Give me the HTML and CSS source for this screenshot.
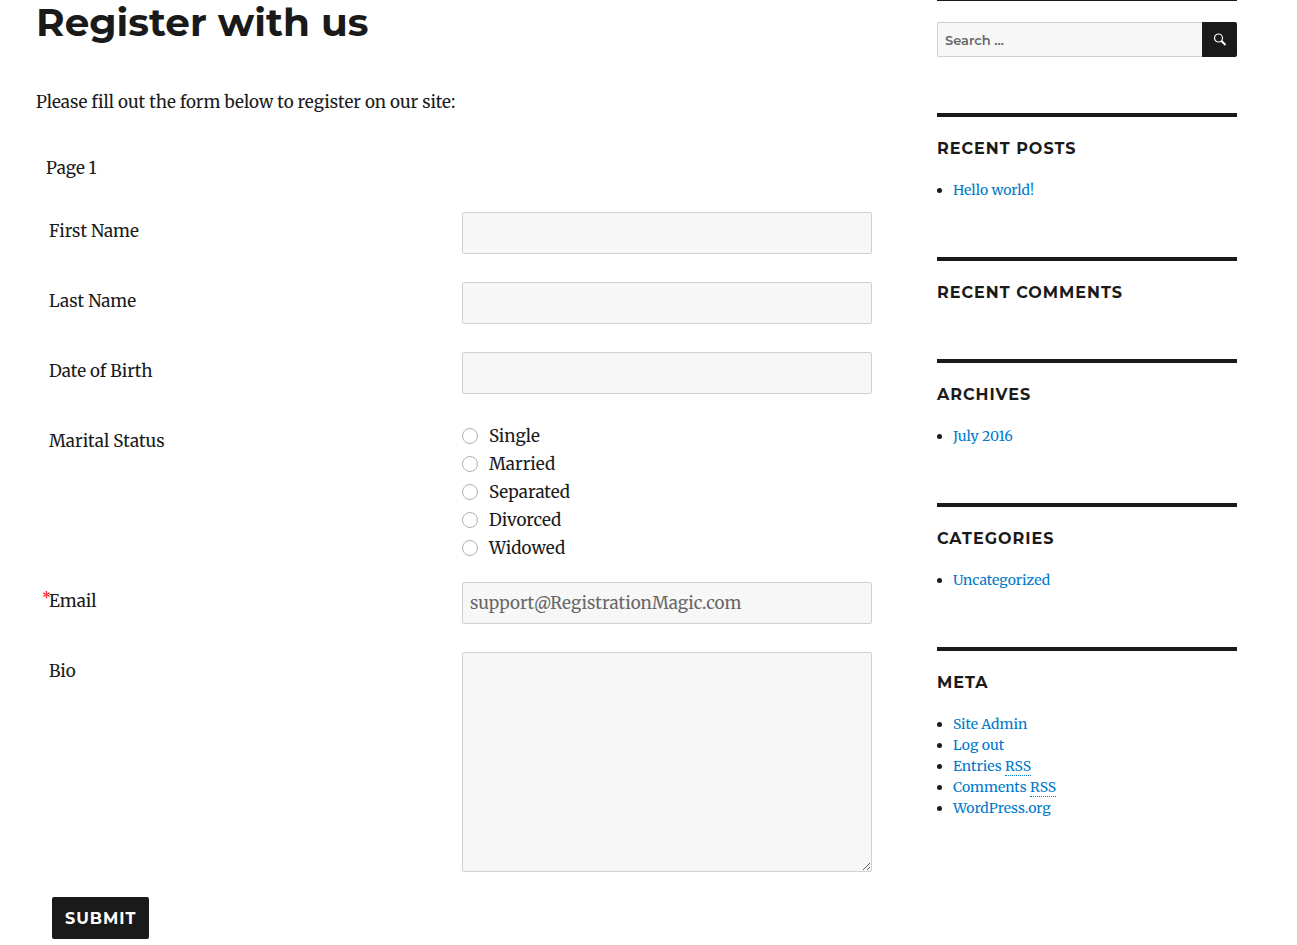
FILE: index.html
```html
<!DOCTYPE html>
<html lang="en">
<head>
  <meta charset="UTF-8">
  <meta name="viewport" content="width=device-width, initial-scale=1.0">
  <title>Register with us</title>
  <link rel="stylesheet" href="styles.css">
</head>
<body>
  <div class="site-content">
    <main class="entry">
      <h1 class="entry-title">Register with us</h1>
      <p class="entry-intro">Please fill out the form below to register on our site:</p>

      <form class="register-form">
        <div class="page-title">Page 1</div>

        <div class="form-row">
          <label class="row-label" for="first-name"><span class="mark"></span>First Name</label>
          <input class="field" type="text" id="first-name">
        </div>
        <div class="form-row">
          <label class="row-label" for="last-name"><span class="mark"></span>Last Name</label>
          <input class="field" type="text" id="last-name">
        </div>
        <div class="form-row">
          <label class="row-label" for="birth-date"><span class="mark"></span>Date of Birth</label>
          <input class="field" type="text" id="birth-date">
        </div>
        <div class="form-row form-row-radio" role="radiogroup" aria-labelledby="marital-label">
          <div class="row-label" id="marital-label"><span class="mark"></span>Marital Status</div>
          <div class="options">
            <label class="option"><input type="radio" name="marital" value="single">Single</label>
            <label class="option"><input type="radio" name="marital" value="married">Married</label>
            <label class="option"><input type="radio" name="marital" value="separated">Separated</label>
            <label class="option"><input type="radio" name="marital" value="divorced">Divorced</label>
            <label class="option"><input type="radio" name="marital" value="widowed">Widowed</label>
          </div>
        </div>
        <div class="form-row">
          <label class="row-label" for="email"><span class="mark">*</span>Email</label>
          <input class="field" type="email" id="email" placeholder="support@RegistrationMagic.com" required>
        </div>
        <div class="form-row">
          <label class="row-label" for="bio"><span class="mark"></span>Bio</label>
          <textarea class="field field-area" id="bio"></textarea>
        </div>

        <button class="submit" type="submit">Submit</button>
      </form>
    </main>

    <aside class="sidebar">
      <section class="widget widget-search">
        <form class="search-form" role="search">
          <input class="search-field" type="search" placeholder="Search …" aria-label="Search">
          <button class="search-submit" type="submit" aria-label="Search">
            <svg width="14" height="14" viewBox="0 0 14 14" fill="none" stroke="#fff">
              <circle cx="5.5" cy="5" r="4" stroke-width="1.2"/>
              <path d="M8.5 8L12.5 12" stroke-width="2"/>
            </svg>
          </button>
        </form>
      </section>

      <section class="widget">
        <h2 class="widget-title">Recent Posts</h2>
        <ul>
          <li><a href="#">Hello world!</a></li>
        </ul>
      </section>

      <section class="widget">
        <h2 class="widget-title">Recent Comments</h2>
      </section>

      <section class="widget">
        <h2 class="widget-title">Archives</h2>
        <ul>
          <li><a href="#">July 2016</a></li>
        </ul>
      </section>

      <section class="widget">
        <h2 class="widget-title">Categories</h2>
        <ul>
          <li><a href="#">Uncategorized</a></li>
        </ul>
      </section>

      <section class="widget">
        <h2 class="widget-title">Meta</h2>
        <ul>
          <li><a href="#">Site Admin</a></li>
          <li><a href="#">Log out</a></li>
          <li><a href="#">Entries <abbr title="Really Simple Syndication">RSS</abbr></a></li>
          <li><a href="#">Comments <abbr title="Really Simple Syndication">RSS</abbr></a></li>
          <li><a href="#">WordPress.org</a></li>
        </ul>
      </section>
    </aside>
  </div>
</body>
</html>
```
FILE: styles.css
```css
* {
  box-sizing: border-box;
}

body {
  margin: 0;
  background: #fff;
  color: #1a1a1a;
  font-family: Merriweather, "DejaVu Serif", serif;
  font-size: 17px;
  line-height: 28px;
}

.site-content {
  display: grid;
  grid-template-columns: minmax(0, 1fr) 300px;
  gap: 65px;
  padding: 0 60px 0 36px;
}

/* Content */
.entry-title {
  margin: 0 0 44px;
  font-family: Montserrat, Inter, sans-serif;
  font-size: 39px;
  font-weight: 700;
  line-height: 44px;
}

.entry-intro {
  margin: 0 0 38px;
}

.register-form {
  padding-left: 6px;
}

.page-title {
  margin-bottom: 30px;
  padding-left: 4px;
}

.form-row {
  display: grid;
  grid-template-columns: 1fr 1fr;
  gap: 10px;
  align-items: start;
  margin-bottom: 28px;
}

.form-row-radio {
  margin-bottom: 20px;
}

.row-label {
  display: flex;
  padding-top: 5px;
}

/* reserves the same space whether or not the field is required */
.mark {
  width: 7px;
  color: #f00;
  font-size: 14px;
  line-height: 21px;
}

.field {
  width: 100%;
  height: 42px;
  margin: 0;
  padding: 6px 7px;
  border: 1px solid #d1d1d1;
  border-radius: 2px;
  background: #f7f7f7;
  color: #686868;
  font: inherit;
}

.field::placeholder,
.search-field::placeholder {
  color: #686868;
  opacity: 1;
}

.field-area {
  display: block;
  height: 220px;
  resize: vertical;
}

.option {
  display: flex;
  align-items: center;
  gap: 11px;
}

.option input {
  appearance: none;
  width: 16px;
  height: 16px;
  margin: 0;
  border: 1px solid #b0b0b0;
  border-radius: 50%;
  background: #fff;
}

.option input:checked {
  border: 5px solid #007acc;
}

.submit {
  display: block;
  height: 42px;
  margin: -3px 0 6px 10px;
  padding: 0 13px;
  border: 0;
  border-radius: 2px;
  background: #1a1a1a;
  color: #fff;
  font-family: Montserrat, Inter, sans-serif;
  font-size: 16px;
  font-weight: 700;
  letter-spacing: 1px;
  text-transform: uppercase;
}

/* Sidebar */
.sidebar {
  font-size: 14px;
  line-height: 21px;
}

.widget {
  margin-bottom: 56px;
  padding-top: 21px;
  border-top: 4px solid #1a1a1a;
}

.widget-search {
  border-top-width: 1px;
}

.widget-title {
  margin: 0 0 21px;
  font-family: Montserrat, Inter, sans-serif;
  font-size: 16px;
  font-weight: 700;
  letter-spacing: 1px;
  line-height: 21px;
  text-transform: uppercase;
}

.widget ul {
  margin: 0;
  padding-left: 16px;
}

.widget a {
  color: #007acc;
  text-decoration: none;
}

.widget abbr {
  border-bottom: 1px dotted #007acc;
  text-decoration: none;
}

.search-form {
  display: flex;
}

.search-field {
  flex: 1;
  min-width: 0;
  height: 35px;
  padding: 0 7px;
  border: 1px solid #d1d1d1;
  border-right: 0;
  border-radius: 2px 0 0 2px;
  background: #f7f7f7;
  color: #686868;
  font-family: Montserrat, Inter, sans-serif;
  font-size: 13px;
  font-weight: 600;
}

.search-submit {
  display: flex;
  align-items: center;
  justify-content: center;
  width: 35px;
  height: 35px;
  padding: 0;
  border: 0;
  border-radius: 0 2px 2px 0;
  background: #1a1a1a;
}
```
